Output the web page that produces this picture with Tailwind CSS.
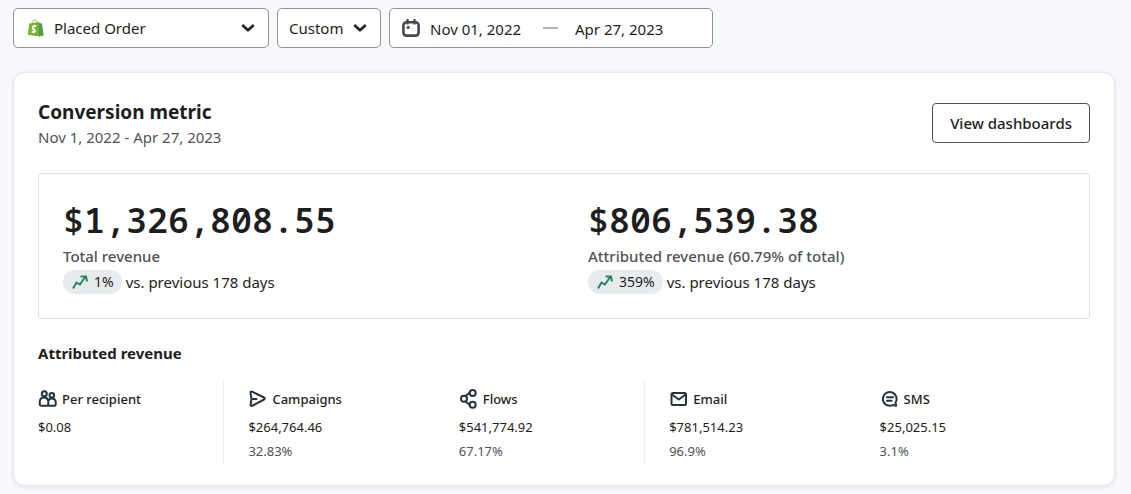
<!doctype html>
<html lang="en">
  <head>
    <meta charset="UTF-8" />
    <meta name="viewport" content="width=device-width, initial-scale=1.0" />
    <title>Conversion metric</title>
    <script src="https://cdn.jsdelivr.net/npm/@tailwindcss/browser@4"></script>
  </head>
  <body class="min-h-screen bg-[#f8f9fc] font-['Noto_Sans',sans-serif] text-[#1d1e20]">
    <main class="pt-2 pr-4 pb-2 pl-[13px]">
      <!-- Filters -->
      <div class="flex gap-2 text-[15px]">
        <div class="relative w-64">
          <select
            aria-label="Metric"
            class="h-10 w-full appearance-none rounded-[5px] border border-[#8f9498] bg-white pl-10"
          >
            <option>Placed Order</option>
          </select>
          <svg class="pointer-events-none absolute top-[11px] left-[14px] h-[18px] w-[18px]" viewBox="0 0 18 18" fill="none">
            <path d="M5.5 4.500C5.800 2 7 .8 8.300.8c1.200 0 1.700 1.300 1.700 3.500" stroke="#b9cf8c" stroke-width="1.200" />
            <path d="M2.300 4.600 11.500 3l.8 14.500L.8 15.800z" fill="#7ab530" />
            <path d="M11.300 3l1.700 1.200 2 .4 1.700 11.900-4.600 1z" fill="#4f9f45" />
            <path d="M9.300 7.400C7.800 6.500 5.600 7 5.600 8.800c0 1.900 2.600 1.700 2.400 3.300-.2 1.300-1.900 1.300-3.200.3" stroke="#fff" stroke-width="1.900" />
          </svg>
          <svg class="pointer-events-none absolute top-[15px] right-[14px] h-[10px] w-[14px]" viewBox="0 0 14 10" fill="none" stroke="#1d1e20" stroke-width="2.600" stroke-linejoin="round">
            <path d="M1.300 2 7 7.300 12.700 2" />
          </svg>
        </div>
        <div class="relative w-[104px]">
          <select
            aria-label="Date range"
            class="h-10 w-full appearance-none rounded-[5px] border border-[#8f9498] bg-white pl-[11px]"
          >
            <option>Custom</option>
          </select>
          <svg class="pointer-events-none absolute top-[15px] right-[14px] h-[10px] w-[14px]" viewBox="0 0 14 10" fill="none" stroke="#1d1e20" stroke-width="2.600" stroke-linejoin="round">
            <path d="M1.300 2 7 7.300 12.700 2" />
          </svg>
        </div>
        <div class="flex h-10 w-[324px] items-center rounded-[5px] border border-[#8f9498] bg-white pl-3">
          <svg class="h-[18px] w-[18px] shrink-0" viewBox="0 0 18 18" fill="none" stroke="#45494d" stroke-width="2.600">
            <rect x="1.400" y="3.200" width="15.200" height="13.400" rx="3" />
            <path d="M5.500 0v5.500M12.500 0v5.500" stroke-width="2.200" />
            <path d="M4.800 8.500h2.800" stroke-width="2.800" />
          </svg>
          <input aria-label="Start date" value="Nov 01, 2022" class="ml-[10px] w-[100px] pt-[2px] outline-none" />
          <span class="ml-[13px] h-[2px] w-[15px] bg-[#aeb4b6]"></span>
          <input aria-label="End date" value="Apr 27, 2023" class="ml-[17px] w-[100px] pt-[2px] outline-none" />
        </div>
      </div>

      <!-- Conversion metric card -->
      <section class="mt-6 rounded-xl border border-[#e6e9ed] bg-white px-6 pt-6 pb-[22px] shadow-[0_1px_4px_rgba(30,50,70,0.12)]">
        <div class="flex items-center justify-between">
          <div class="pt-px">
            <h1 class="text-[19px] leading-7 font-bold">Conversion metric</h1>
            <p class="text-[15px] leading-[23px] text-[#505356]">Nov 1, 2022 - Apr 27, 2023</p>
          </div>
          <button class="h-10 rounded border border-[#505356] px-[17px] text-[15px] font-medium">View dashboards</button>
        </div>

        <div class="mt-6 grid grid-cols-2 rounded-[3px] border border-[#dde2e6] py-6">
          <div class="pl-6">
            <p class="font-['Noto_Sans_Mono','DejaVu_Sans_Mono',monospace] text-[35px] leading-[44px] font-semibold">$1,326,808.55</p>
            <p class="mt-[2px] mb-[2px] text-[15px] leading-6 font-medium text-[#505356]">Total revenue</p>
            <div class="flex items-center gap-1 text-[15px] leading-6">
              <span class="flex h-6 items-center gap-[5px] rounded-full bg-[#e8ebee] px-2 text-[14px]">
                <svg class="h-[18px] w-[18px]" viewBox="0 0 18 18" fill="none" stroke="#23875a" stroke-width="2">
                  <path d="M2 15.500 5.500 9.500 9 11.500 14.500 3.500M9.500 3.500h5.500l1 5" />
                </svg>
                1%
              </span>
              vs. previous 178 days
            </div>
          </div>
          <div class="pl-6">
            <p class="font-['Noto_Sans_Mono','DejaVu_Sans_Mono',monospace] text-[35px] leading-[44px] font-semibold">$806,539.38</p>
            <p class="mt-[2px] mb-[2px] text-[15px] leading-6 font-medium text-[#505356]">Attributed revenue (60.79% of total)</p>
            <div class="flex items-center gap-1 text-[15px] leading-6">
              <span class="flex h-6 items-center gap-[5px] rounded-full bg-[#e8ebee] px-2 text-[14px]">
                <svg class="h-[18px] w-[18px]" viewBox="0 0 18 18" fill="none" stroke="#23875a" stroke-width="2">
                  <path d="M2 15.500 5.500 9.500 9 11.500 14.500 3.500M9.500 3.500h5.500l1 5" />
                </svg>
                359%
              </span>
              vs. previous 178 days
            </div>
          </div>
        </div>

        <h2 class="mt-[22px] text-[15px] leading-6 font-bold">Attributed revenue</h2>
        <div class="mt-[14px] grid grid-cols-5 text-[13px] leading-6">
          <div class="mr-6 border-r border-[#eceeef] pt-2">
            <h3 class="flex items-center gap-1 font-medium">
              <svg class="h-5 w-5" viewBox="0 0 20 20" fill="none" stroke="#24343f" stroke-width="2" stroke-linejoin="round">
                <circle cx="6.300" cy="4.800" r="2.500" />
                <circle cx="13.800" cy="6.300" r="2.300" />
                <path d="M10.300 16.800H3.200c-.8 0-1.400-.6-1.400-1.400V12.500a4.300 4.300 0 0 1 8.500-.5zM10.300 16.800h6c.8 0 1.400-.6 1.400-1.400V13a3.800 3.800 0 0 0-7.400-1" />
              </svg>
              Per recipient
            </h3>
            <p class="mt-1">$0.08</p>
          </div>
          <div class="pt-2">
            <h3 class="flex items-center gap-1 font-medium">
              <svg class="h-5 w-5" viewBox="0 0 20 20" fill="none" stroke="#24343f" stroke-width="2" stroke-linecap="round" stroke-linejoin="round">
                <path d="M2.500 3.600c0-.9.800-1.300 1.600-.9l12 5.800c.9.500.9 1.500 0 2l-12 6.300c-.9.400-1.600-.2-1.500-1l.9-5.800zM3.500 10h5" />
              </svg>
              Campaigns
            </h3>
            <p class="mt-1">$264,764.46</p>
            <p class="text-[#505356]">32.83%</p>
          </div>
          <div class="mr-6 border-r border-[#eceeef] pt-2">
            <h3 class="flex items-center gap-1 font-medium">
              <svg class="h-5 w-5" viewBox="0 0 20 20" fill="none" stroke="#24343f" stroke-width="2">
                <circle cx="13.700" cy="4" r="3" />
                <circle cx="5" cy="9.800" r="3" />
                <circle cx="13.700" cy="15.800" r="3" />
                <path d="M6.500 7l4.300-3.500M6.500 12.500l4.300 3.500" />
              </svg>
              Flows
            </h3>
            <p class="mt-1">$541,774.92</p>
            <p class="text-[#505356]">67.17%</p>
          </div>
          <div class="pt-2">
            <h3 class="flex items-center gap-1 font-medium">
              <svg class="h-5 w-5" viewBox="0 0 20 20" fill="none" stroke="#24343f" stroke-width="2" stroke-linejoin="round">
                <rect x="2.500" y="4" width="14.500" height="12" rx="1.500" />
                <path d="M3 5.500l6.800 5 6.800-5" />
              </svg>
              Email
            </h3>
            <p class="mt-1">$781,514.23</p>
            <p class="text-[#505356]">96.9%</p>
          </div>
          <div class="pt-2">
            <h3 class="flex items-center gap-1 font-medium">
              <svg class="h-5 w-5" viewBox="0 0 20 20" fill="none" stroke="#24343f" stroke-width="2" stroke-linecap="round" stroke-linejoin="round">
                <path d="M15.500 13.700a6.900 6.900 0 1 0-5.800 3.100c1.200 0 2-.2 3-.7l3.500.7z" />
                <path d="M7 8.300h6M7 11.700h4.500" />
              </svg>
              SMS
            </h3>
            <p class="mt-1">$25,025.15</p>
            <p class="text-[#505356]">3.1%</p>
          </div>
        </div>
      </section>
    </main>
  </body>
</html>
